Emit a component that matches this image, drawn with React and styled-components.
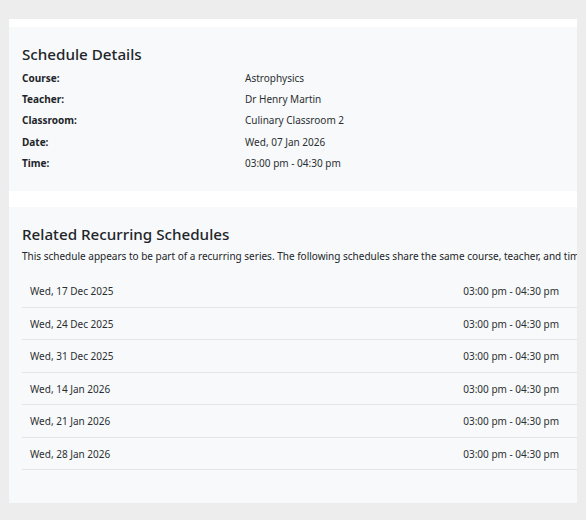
import React from "react";
import styled, { createGlobalStyle } from "styled-components";

const GlobalStyle = createGlobalStyle`
  html, body {
    margin: 0;
    padding: 0;
    background: #ededed;
    font-family: "Noto Sans", "Open Sans", sans-serif;
    color: #212529;
  }
`;

const Page = styled.div`
  width: 568px;
  margin: 19px 0 0 9px;
  padding-top: 8px;
  background: #ffffff;
  display: flex;
  flex-direction: column;
  gap: 16px;
`;

const Section = styled.section`
  background: #f8f9fa;
  overflow: hidden;
  padding: ${(p) => p.$pad};
`;

const Heading = styled.h2`
  margin: 0;
  font-size: 15.2px;
  font-weight: 500;
  line-height: 22px;
`;

const DetailGrid = styled.dl`
  margin: 2px 0 0;
  display: grid;
  grid-template-columns: 223px 1fr;
  grid-auto-rows: 21.3px;
  align-items: center;
  font-size: 10px;
`;

const Label = styled.dt`
  font-weight: 700;
`;

const Value = styled.dd`
  margin: 0;
  color: #2b2f33;
`;

const Intro = styled.p`
  margin: 0 0 8px;
  font-size: 10px;
  line-height: 22px;
  white-space: nowrap;
`;

const List = styled.ul`
  list-style: none;
  margin: 0;
  padding: 0;
`;

const Row = styled.li`
  height: 31.5px;
  display: flex;
  align-items: center;
  justify-content: space-between;
  padding: 0 18px 0 8px;
  border-bottom: 1px solid #e3e6e9;
  font-size: 10px;
  color: #2b2f33;
`;

const details = [
  ["Course:", "Astrophysics"],
  ["Teacher:", "Dr Henry Martin"],
  ["Classroom:", "Culinary Classroom 2"],
  ["Date:", "Wed, 07 Jan 2026"],
  ["Time:", "03:00 pm - 04:30 pm"],
];

const related = [
  "Wed, 17 Dec 2025",
  "Wed, 24 Dec 2025",
  "Wed, 31 Dec 2025",
  "Wed, 14 Jan 2026",
  "Wed, 21 Jan 2026",
  "Wed, 28 Jan 2026",
];

export default function App() {
  return (
    <>
      <GlobalStyle />
      <Page>
        <Section $pad="16px 13px 18px">
          <Heading>Schedule Details</Heading>
          <DetailGrid>
            {details.map(([label, value]) => (
              <React.Fragment key={label}>
                <Label>{label}</Label>
                <Value>{value}</Value>
              </React.Fragment>
            ))}
          </DetailGrid>
        </Section>
        <Section $pad="16px 0 33px 13px">
          <Heading>Related Recurring Schedules</Heading>
          <Intro>
            This schedule appears to be part of a recurring series. The following schedules share the same course, teacher, and time slot.
          </Intro>
          <List>
            {related.map((date) => (
              <Row key={date}>
                <span>{date}</span>
                <span>03:00 pm - 04:30 pm</span>
              </Row>
            ))}
          </List>
        </Section>
      </Page>
    </>
  );
}
